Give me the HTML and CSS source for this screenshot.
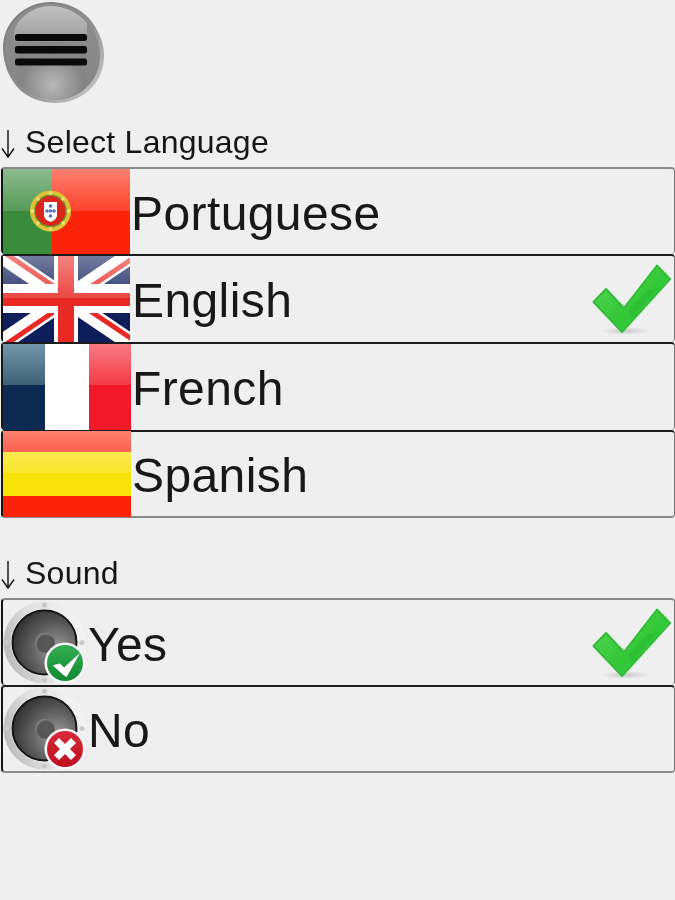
FILE: index.html
```html
<!DOCTYPE html>
<html lang="en">
<head>
<meta charset="utf-8">
<title>Settings</title>
<link rel="stylesheet" href="styles.css">
</head>
<body>
<svg class="defs" width="0" height="0" aria-hidden="true">
  <defs>
    <linearGradient id="gloss" x1="0" y1="0" x2="0" y2="1">
      <stop offset="0" stop-color="#fff" stop-opacity=".42"/>
      <stop offset="1" stop-color="#fff" stop-opacity=".14"/>
    </linearGradient>
    <linearGradient id="frBlue" x1="0" y1="0" x2="0" y2="1">
      <stop offset="0" stop-color="#7396aa"/>
      <stop offset="1" stop-color="#3d6076"/>
    </linearGradient>
    <linearGradient id="tickFill" x1="0" y1="0" x2="1" y2="1">
      <stop offset="0" stop-color="#58d455"/>
      <stop offset=".55" stop-color="#35c83a"/>
      <stop offset="1" stop-color="#34cb3e"/>
    </linearGradient>
    <radialGradient id="tickShadow">
      <stop offset="0" stop-color="#000" stop-opacity=".16"/>
      <stop offset="1" stop-color="#000" stop-opacity="0"/>
    </radialGradient>
    <linearGradient id="silver" x1="0" y1=".6" x2="1" y2=".3">
      <stop offset="0" stop-color="#bababa"/>
      <stop offset=".4" stop-color="#e0e0e0"/>
      <stop offset="1" stop-color="#f5f5f5"/>
    </linearGradient>
    <radialGradient id="cone" cx=".68" cy=".62" r=".72">
      <stop offset="0" stop-color="#a0a0a0"/>
      <stop offset=".55" stop-color="#5e5e5e"/>
      <stop offset="1" stop-color="#2f2f2f"/>
    </radialGradient>
    <radialGradient id="hub" cx=".55" cy=".55" r=".55">
      <stop offset="0" stop-color="#5a5a5a"/>
      <stop offset=".75" stop-color="#555"/>
      <stop offset="1" stop-color="#888"/>
    </radialGradient>
    <linearGradient id="okFill" x1="0" y1="0" x2="0" y2="1">
      <stop offset="0" stop-color="#34ad52"/>
      <stop offset="1" stop-color="#108a32"/>
    </linearGradient>
    <linearGradient id="noFill" x1="0" y1="0" x2="0" y2="1">
      <stop offset="0" stop-color="#d92a38"/>
      <stop offset="1" stop-color="#bc0f20"/>
    </linearGradient>
    <linearGradient id="rim" x1="0" y1="0" x2="1" y2="1">
      <stop offset="0" stop-color="#7a7a7a"/>
      <stop offset=".55" stop-color="#8f8f8f"/>
      <stop offset="1" stop-color="#d2d2d2"/>
    </linearGradient>
    <radialGradient id="orb" cx=".5" cy=".84" r=".72">
      <stop offset="0" stop-color="#b8b8b8"/>
      <stop offset=".45" stop-color="#858585"/>
      <stop offset="1" stop-color="#8c8c8c"/>
    </radialGradient>
    <linearGradient id="orbTop" x1="0" y1="0" x2="0" y2="1">
      <stop offset="0" stop-color="#c0c0c0"/>
      <stop offset=".7" stop-color="#a8a8a8"/>
      <stop offset="1" stop-color="#929292"/>
    </linearGradient>
    <symbol id="arrow" viewBox="0 0 14 28">
      <path d="M7 0V26M1 18.500 7 27 13 18.500" fill="none" stroke="#111" stroke-width="1.400"/>
    </symbol>
    <symbol id="tick" viewBox="0 0 80 72">
      <ellipse cx="34" cy="67" rx="24" ry="4" fill="url(#tickShadow)"/>
      <path d="M1.500 38 14 25 32 44 65 1.500 78 15 30 68Z" fill="url(#tickFill)" stroke="#2fbf36" stroke-width="2" stroke-linejoin="round"/>
      <path d="M36 47 55 27 66 24 40 54Z" fill="#18a82a" opacity=".3"/>
    </symbol>
    <symbol id="speaker" viewBox="0 0 84 84">
      <circle cx="41.500" cy="41.500" r="41" fill="url(#silver)"/>
      <circle cx="41.500" cy="41.500" r="33.500" fill="#f4f4f4"/>
      <circle cx="41.500" cy="41.500" r="32" fill="url(#cone)" stroke="#141414" stroke-width="2"/>
      <circle cx="42" cy="42" r="10" fill="url(#hub)"/>
      <g fill="#c8c8c8"><circle cx="41.500" cy="4" r="2.500"/><circle cx="41.500" cy="79" r="2.500"/><circle cx="4" cy="41.500" r="2.500"/><circle cx="79" cy="41.500" r="2.500"/></g>
    </symbol>
  </defs>
</svg>

<header class="top">
  <button class="menu" type="button" aria-label="Menu">
    <svg width="105" height="105" viewBox="0 0 105 105">
      <path d="M50 2C70 2 85 12 92 22 100 33 104 45 104 56 104 85 80 103 56 103 40 103 28 97 20 90 10 80 3 65 3 48 3 22 25 2 50 2Z" fill="url(#rim)"/>
      <path d="M50 4C68 4 83 13 90 24 96 33 100 45 100 56 100 82 78 100 56 100 41 100 30 94 22 87 12 78 5 64 5 48 5 24 26 4 50 4Z" fill="url(#orb)"/>
      <path d="M14 34C15 20 32 6 50 6 65 6 79 13 87 23V42H14Z" fill="url(#orbTop)"/>
      <g fill="#0a0a0a">
        <rect x="15" y="34" width="72" height="7" rx="2.500"/>
        <rect x="15" y="46" width="72" height="7.500" rx="2.500"/>
        <rect x="15" y="58.500" width="72" height="7" rx="2.500"/>
      </g>
    </svg>
  </button>
</header>

<h2 class="label"><svg class="arrow" width="14" height="28"><use href="#arrow"/></svg>Select Language</h2>
<ul class="list">
  <li class="row row-first">
    <svg class="flag" viewBox="0 0 127 85" preserveAspectRatio="none">
      <rect width="127" height="85" fill="#fb2408"/>
      <rect width="49" height="85" fill="#3a8a3c"/>
      <rect width="127" height="42" fill="url(#gloss)"/>
      <circle cx="47.500" cy="42" r="20.500" fill="#dcc335"/>
      <circle cx="47.500" cy="42" r="16.500" fill="#6e9434"/>
      <circle cx="47.500" cy="42" r="15" fill="#d8261b"/>
      <path d="M41 33H54V46Q54 51 47.500 53 41 51 41 46Z" fill="#fff"/>
      <g fill="#5874c0"><circle cx="47.500" cy="37" r="1.800"/><circle cx="44" cy="42" r="1.800"/><circle cx="51" cy="42" r="1.800"/><circle cx="47.500" cy="42" r="1.800"/><circle cx="47.500" cy="47" r="1.800"/></g>
      <g fill="#efe06a"><circle cx="47.500" cy="24" r="2"/><circle cx="47.500" cy="60" r="2"/><circle cx="29.500" cy="42" r="2"/><circle cx="65.500" cy="42" r="2"/><circle cx="35" cy="30" r="1.800"/><circle cx="60" cy="30" r="1.800"/><circle cx="35" cy="54" r="1.800"/><circle cx="60" cy="54" r="1.800"/></g>
    </svg>
    <span class="name">Portuguese</span>
  </li>
  <li class="row">
    <svg class="flag flag-uk" viewBox="0 0 127 86" preserveAspectRatio="none">
      <rect width="127" height="86" fill="#0e1e5a"/>
      <path d="M0 0 127 86M127 0 0 86" stroke="#fff" stroke-width="17"/>
      <path d="M0 0 63 43M127 86 63 43" stroke="#e92a24" stroke-width="5" transform="translate(2 -3)"/>
      <path d="M127 0 63 43M0 86 63 43" stroke="#e92a24" stroke-width="5" transform="translate(2 3)"/>
      <rect x="51" width="24" height="86" fill="#fff"/>
      <rect y="28" width="127" height="29" fill="#fff"/>
      <rect x="55" width="16" height="86" fill="#e92a24"/>
      <rect y="37" width="127" height="13" fill="#e92a24"/>
      <rect width="127" height="42" fill="url(#gloss)"/>
    </svg>
    <span class="name name-wide">English</span>
    <svg class="tick" width="80" height="72"><use href="#tick"/></svg>
  </li>
  <li class="row">
    <svg class="flag flag-wide" viewBox="0 0 128 86" preserveAspectRatio="none">
      <rect width="128" height="86" fill="#f21a2a"/>
      <rect width="128" height="41" fill="url(#gloss)"/>
      <rect width="42" height="86" fill="#0c2a52"/>
      <rect width="42" height="41" fill="url(#frBlue)"/>
      <rect x="42" width="44" height="86" fill="#fff"/>
    </svg>
    <span class="name name-french">French</span>
  </li>
  <li class="row row-last">
    <svg class="flag flag-wide" viewBox="0 0 128 86" preserveAspectRatio="none">
      <rect width="128" height="86" fill="#fb2408"/>
      <rect y="21" width="128" height="44" fill="#f8e20a"/>
      <rect width="128" height="42" fill="url(#gloss)"/>
    </svg>
    <span class="name">Spanish</span>
  </li>
</ul>

<h2 class="label label-sound"><svg class="arrow" width="14" height="28"><use href="#arrow"/></svg>Sound</h2>
<ul class="list">
  <li class="row row-first">
    <span class="sound">
      <svg width="84" height="84"><use href="#speaker"/></svg>
      <svg class="badge" viewBox="0 0 42 42">
        <circle cx="21" cy="21" r="20.500" fill="#f6f6f6"/>
        <circle cx="21" cy="21" r="18" fill="url(#okFill)"/>
        <path d="M8.700 23.300 16 21.500 20 25.500 36 11 22.700 35 19.300 33Z" fill="#fff"/>
      </svg>
    </span>
    <span class="name name-sound">Yes</span>
    <svg class="tick" width="80" height="72"><use href="#tick"/></svg>
  </li>
  <li class="row row-last">
    <span class="sound">
      <svg width="84" height="84"><use href="#speaker"/></svg>
      <svg class="badge" viewBox="0 0 42 42">
        <circle cx="21" cy="21" r="20.500" fill="#f6f6f6"/>
        <circle cx="21" cy="21" r="18" fill="url(#noFill)"/>
        <path d="M10 15 15 10 21 16 27 10 32 15 26 21 32 27 27 32 21 26 15 32 10 27 16 21Z" fill="#fff"/>
      </svg>
    </span>
    <span class="name name-sound">No</span>
  </li>
</ul>
</body>
</html>
```

FILE: styles.css
```css
* { box-sizing: border-box; }

html, body { height: 100%; }

body {
  margin: 0;
  background: #efefef;
  color: #111;
  font-family: "Liberation Sans", Arial, sans-serif;
  overflow: hidden;
  filter: blur(.35px);
}

.defs { position: absolute; }

.top { height: 106px; }

.menu {
  display: block;
  width: 105px;
  height: 105px;
  padding: 0;
  border: 0;
  background: none;
}

.menu svg { display: block; }

.label {
  display: flex;
  align-items: flex-end;
  height: 61px;
  margin: 0;
  padding: 0 0 7px 1px;
  font-size: 32px;
  font-weight: 400;
  line-height: 36px;
  letter-spacing: .25px;
  color: #161616;
}

.label-sound { height: 80px; }

.arrow { flex: none; margin: 0 10px 2px 0; }

.list { margin: 0; padding: 0; list-style: none; }

.row {
  position: relative;
  display: flex;
  align-items: center;
  height: 88px;
  margin-left: 1px;
  border-top: 2px solid #1c1c1c;
  border-left: 2px solid #161616;
  border-right: 1px solid #777;
  border-radius: 4px;
}

.row-first { height: 87px; border-top-color: #8a8a8a; }

.row-last { border-bottom: 2px solid #8a8a8a; }

.flag { flex: none; display: block; width: 127px; height: 85px; }

.flag-uk { height: 86px; }

.flag-wide { width: 128px; height: 86px; }

.name {
  padding: 4px 0 0 1px;
  font-size: 48px;
  line-height: 56px;
  letter-spacing: .4px;
  color: #181818;
}

.name-wide { padding-left: 2px; }

.name-french { padding-left: 1px; }

.name-sound { padding-left: 1px; }

.tick { position: absolute; right: 2px; top: 8px; }

.sound {
  position: relative;
  flex: none;
  display: block;
  width: 84px;
  height: 84px;
}

.sound svg { display: block; }

.sound .badge {
  position: absolute;
  left: 41px;
  top: 41px;
  width: 42px;
  height: 42px;
}
```
